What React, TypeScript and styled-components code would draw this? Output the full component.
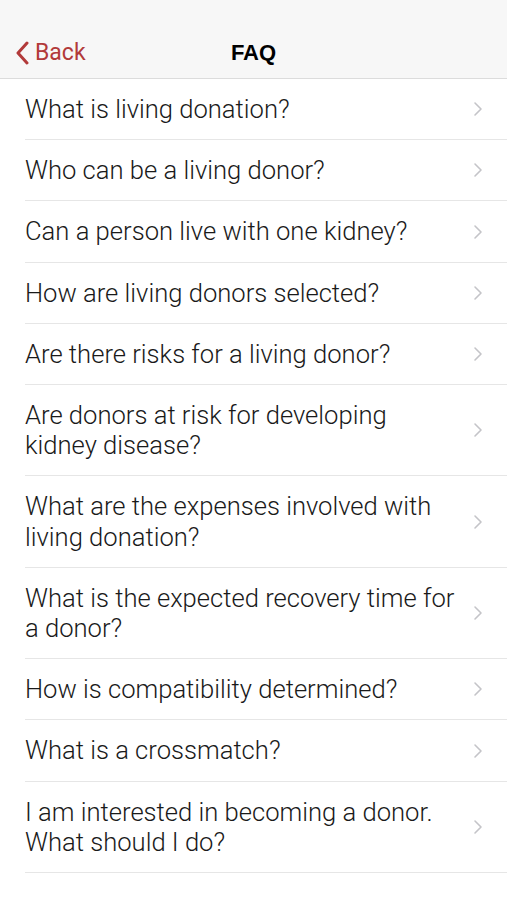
import React from 'react';
import styled, { createGlobalStyle } from 'styled-components';

const GlobalStyle = createGlobalStyle`
    body {
        margin: 0;
        background: #ffffff;
        font-family: Roboto, "Noto Sans", sans-serif;
    }
`;

const Page = styled.div`
    width: 507px;
    min-height: 900px;
    background: #ffffff;
`;

const NavBar = styled.div`
    height: 79px;
    background: #f7f7f7;
    border-bottom: 1px solid #dcdcdc;
    display: grid;
    grid-template-columns: 1fr auto 1fr;
    align-items: end;
    padding-bottom: 12px;
    box-sizing: border-box;
`;

const BackButton = styled.div`
    display: flex;
    align-items: center;
    gap: 6px;
    padding-left: 15px;
    color: #b23a3a;
    font-size: 23px;
    font-weight: 400;
`;

const Title = styled.div`
    font-family: "Liberation Sans", Arial, sans-serif;
    font-weight: 700;
    font-size: 22px;
    color: #000;
`;

const List = styled.div`
    padding-left: 25px;
`;

const Row = styled.div`
    display: flex;
    align-items: center;
    padding: 15px 0 15px 0;
    border-bottom: 1px solid #e6e6e6;
`;

const Question = styled.div`
    flex: 1;
    font-size: 25.6px;
    font-weight: 300;
    line-height: 30.2px;
    color: #1a1a1a;
    padding-right: 10px;
`;

const Chevron = styled.svg`
    width: 10px;
    height: 16px;
    margin-right: 24px;
    flex-shrink: 0;
`;

const questions = [
    'What is living donation?',
    'Who can be a living donor?',
    'Can a person live with one kidney?',
    'How are living donors selected?',
    'Are there risks for a living donor?',
    'Are donors at risk for developing kidney disease?',
    'What are the expenses involved with living donation?',
    'What is the expected recovery time for a donor?',
    'How is compatibility determined?',
    'What is a crossmatch?',
    'I am interested in becoming a donor. What should I do?',
];

export default function App() {
    return (
        <Page>
            <GlobalStyle />
            <NavBar>
                <BackButton>
                    <svg width="14" height="24" viewBox="0 0 14 24">
                        <path d="M12 2 L3 12 L12 22" fill="none" stroke="#b23a3a" strokeWidth="3" strokeLinecap="round" strokeLinejoin="round" />
                    </svg>
                    Back
                </BackButton>
                <Title>FAQ</Title>
                <div />
            </NavBar>
            <List>
                {
                    questions.map((q, i) => (
                        <Row key={i}>
                            <Question>{q}</Question>
                            <Chevron viewBox="0 0 10 16">
                                <path d="M2 2 L8 8 L2 14" fill="none" stroke="#c4c4c8" strokeWidth="1.6" strokeLinecap="round" strokeLinejoin="round" />
                            </Chevron>
                        </Row>
                    ))
                }
            </List>
        </Page>
    );
}
